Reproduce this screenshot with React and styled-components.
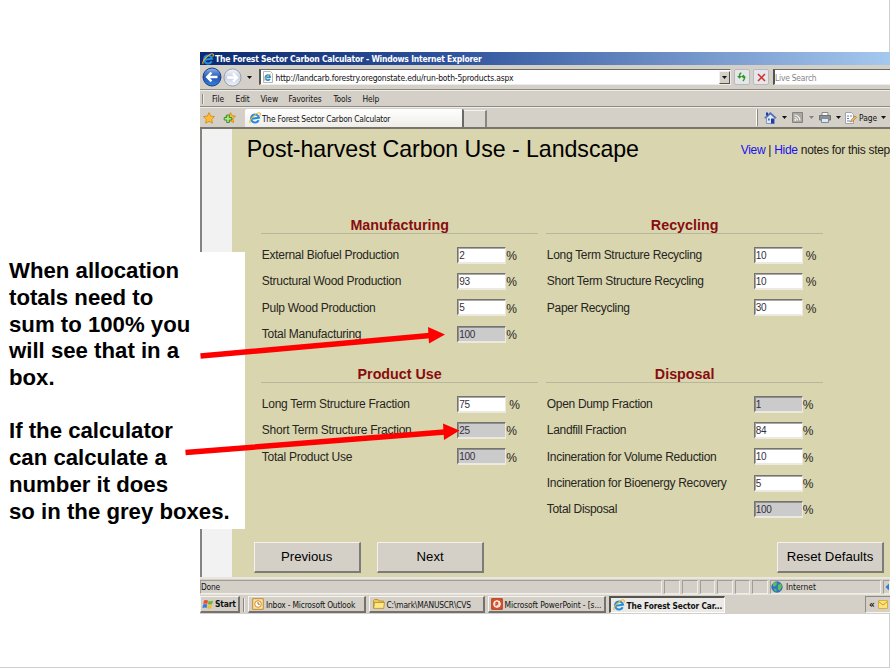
import React from "react";
import styled, { createGlobalStyle } from "styled-components";

const GlobalStyle = createGlobalStyle`
  * { box-sizing: border-box; }
  body { margin: 0; background: #fff; font-family: "Liberation Sans", Arial, sans-serif; }
  svg { flex: none; }
`;

const face = "#d4d0c8";
const khaki = "#d9d5ae";

const Slide = styled.main`
  position: relative;
  width: 890px;
  height: 668px;
  padding: 52px 0 0 200px;
  overflow: hidden;
  background: linear-gradient(#cfcfcf, #cfcfcf) right / 1px 100% no-repeat #fff;
  border-bottom: 1px solid #cfcfcf;
`;

const BrowserWindow = styled.section`
  display: flex;
  flex-direction: column;
  width: 690px;
  height: 562px;
  overflow: hidden;
  background: ${face};
`;

const UiText = styled.span`
  padding-top: ${(p) => p.$drop || 0}px;
  font-family: "DejaVu Sans Condensed", "DejaVu Sans", sans-serif;
  font-stretch: condensed;
  font-size: ${(p) => p.$size || 8.4}px;
  font-weight: ${(p) => (p.$bold ? 700 : 400)};
  letter-spacing: ${(p) => (p.$track === undefined ? -0.2 : p.$track)}px;
  color: ${(p) => p.$color || "#111"};
  line-height: 12px;
  white-space: nowrap;
`;

const TitleBar = styled.header`
  display: flex;
  align-items: center;
  gap: 1px;
  height: 13px;
  padding-left: 2px;
  background: linear-gradient(90deg, #0d2a70 0%, #2d519b 35%, #6d8fc5 68%, #a5c8ef 100%);
`;

const AddressBar = styled.div`
  display: flex;
  align-items: center;
  height: 25px;
  padding-left: 2px;
  border-bottom: 1px solid #8d8b86;
`;

const NavButtons = styled.div`
  display: flex;
  flex: none;
  align-items: center;
  gap: 1px;
  width: 56.5px;
`;

const Field = styled.div`
  display: flex;
  flex: none;
  align-items: center;
  width: ${(p) => p.$width}px;
  height: 16px;
  margin-left: ${(p) => p.$gap || 0}px;
  padding-left: ${(p) => p.$inset || 0}px;
  background: #fff;
  border: 1px solid #eeece6;
  border-top-color: #6b6964;
  border-left: 2px solid #55534f;
  white-space: nowrap;
`;

const UrlText = styled.div`
  flex: 1;
  display: flex;
  align-items: center;
  gap: 2px;
`;

const DropButton = styled.div`
  display: flex;
  align-items: center;
  justify-content: center;
  width: 11px;
  height: 13px;
  background: ${face};
  border: 1px solid #f2f0eb;
  border-right-color: #55534f;
  border-bottom-color: #55534f;
`;

const SquareButton = styled.div`
  display: flex;
  flex: none;
  align-items: center;
  justify-content: center;
  width: 16px;
  height: 16px;
  margin-left: ${(p) => p.$gap}px;
  background: #e6e7ea;
  border: 1px solid #b7bac0;
  border-radius: 2px;
`;

const MenuBar = styled.nav`
  display: flex;
  align-items: center;
  height: 17px;
  padding-left: 2px;
  border-top: 1px solid #efede8;
  border-bottom: 1px solid #8d8b86;
`;

const MenuItem = styled.div`
  display: flex;
  width: ${(p) => p.$width}px;
`;

const Grip = styled.i`
  width: 2px;
  height: ${(p) => p.$height}px;
  margin-right: ${(p) => p.$after}px;
  border-left: 1px solid ${(p) => (p.$raised ? "#fff" : "#8a8882")};
  border-right: 1px solid ${(p) => (p.$raised ? "#8a8882" : "#efede8")};
`;

const TabBar = styled.div`
  display: flex;
  align-items: flex-end;
  height: 22px;
  padding-left: 3px;
  border-top: 1px solid #efede8;
  border-bottom: 2px solid #77756c;
`;

const FavIcons = styled.div`
  display: flex;
  align-items: center;
  gap: 8px;
  width: 42px;
  height: 19px;
`;

const Tab = styled.div`
  display: flex;
  align-items: center;
  gap: 1px;
  width: 219px;
  height: 18px;
  padding-left: 4px;
  background: linear-gradient(#fff, #efede9);
  border-right: 2px solid #6b6964;
  border-radius: 2px 2px 0 0;
`;

const NewTab = styled.div`
  width: 23px;
  height: 17px;
  background: #d9d6cf;
  border-top: 1px solid #f4f2ee;
  border-right: 2px solid #88867f;
`;

const Commands = styled.div`
  flex: 1;
  display: flex;
  align-items: center;
  justify-content: flex-end;
  height: 19px;
`;

const CommandIcon = styled.span`
  display: flex;
  align-items: center;
  width: ${(p) => p.$width}px;
`;

const Page = styled.div`
  display: flex;
  height: 448px;
  border-left: 2px solid #85837f;
`;

const Gutter = styled.div`
  width: 30px;
  background: #f2f2f2;
`;

const Content = styled.div`
  flex: 1;
  padding-left: 15px;
  background: ${khaki};
`;

const TopRow = styled.div`
  display: flex;
  height: 73px;
`;

const Heading = styled.h1`
  width: 494px;
  margin: 0;
  padding-top: 6px;
  font-size: 23.2px;
  font-weight: 400;
  line-height: 28px;
  letter-spacing: -0.06px;
  color: #000;
  white-space: nowrap;
`;

const Notes = styled.div`
  padding-top: 12px;
  font-size: 12px;
  line-height: 18px;
  letter-spacing: -0.29px;
  color: #1c1b18;
  white-space: nowrap;
`;

const NoteLink = styled.a`
  color: #1a10ee;
`;

const Sections = styled.div`
  display: grid;
  grid-template-columns: 277px 277px;
  grid-template-rows: 149px 168px;
  column-gap: 8px;
  padding: 12px 0 0 14.5px;
`;

const Section = styled.section`
  min-width: 0;
`;

const SectionTitle = styled.h2`
  height: 20px;
  margin: 0 0 8px;
  border-bottom: 1px solid #b7b79b;
  font-size: 14.3px;
  font-weight: 700;
  line-height: 22px;
  text-align: center;
  color: #870d10;
`;

const Row = styled.div`
  display: flex;
  align-items: center;
  height: 26.3px;
  padding-left: 0.7px;
`;

const RowLabel = styled.label`
  width: ${(p) => p.$width}px;
  font-size: 12px;
  letter-spacing: ${(p) => p.$track}px;
  color: #26251f;
  white-space: nowrap;
`;

const Value = styled.div`
  width: 49px;
  height: 17px;
  padding-left: 1px;
  background: ${(p) => (p.$grey ? "#cbcbcb" : "#fff")};
  border: 1px solid #757370;
  border-right: 1px solid #ebe9e0;
  border-bottom: 2px solid #ebe9e0;
  box-shadow: inset 1px 1px 0 ${(p) => (p.$grey ? "#8f8e8e" : "#aaa8a6")};
  font-size: 10px;
  line-height: 15px;
  letter-spacing: -0.4px;
  color: #35303c;
`;

const Percent = styled.span`
  padding: 2px 0 0 ${(p) => p.$gap}px;
  font-size: 12px;
  letter-spacing: -0.3px;
  color: #26251f;
`;

const Actions = styled.div`
  display: flex;
  gap: 16.5px;
  padding: 11px 6px 0 7px;
`;

const Button = styled.div`
  width: 107px;
  height: 31px;
  margin-left: ${(p) => (p.$end ? "auto" : 0)};
  background: ${face};
  border: 1px solid #f3f1ea;
  border-right: 2px solid #7d7b78;
  border-bottom: 2px solid #7d7b78;
  font-size: 13.2px;
  line-height: 28px;
  text-align: center;
  white-space: nowrap;
  color: #000;
`;

const StatusBar = styled.footer`
  display: flex;
  align-items: center;
  gap: 2px;
  height: 18px;
  border-top: 2px solid #e9e6df;
  border-bottom: 1px solid #e9e6df;
`;

const StatusCell = styled.div`
  display: flex;
  align-items: center;
  gap: 3px;
  flex: ${(p) => (p.$width ? `0 0 ${p.$width}px` : 1)};
  height: 14px;
  border: 1px solid #a09d96;
  border-right-color: #f0eee9;
  border-bottom-color: #f0eee9;
  overflow: hidden;
`;

const TaskBar = styled.div`
  display: flex;
  align-items: center;
  gap: 3px;
  height: 19px;
`;

const Task = styled.div`
  display: flex;
  align-items: center;
  gap: ${(p) => (p.$gap === undefined ? 2 : p.$gap)}px;
  width: ${(p) => p.$width}px;
  height: 17px;
  padding-left: ${(p) => (p.$pad === undefined ? 4 : p.$pad)}px;
  background: ${(p) => (p.$active ? "#eceae6" : face)};
  border: 1px solid;
  border-color: ${(p) => (p.$active ? "#55534f #fff #fff #55534f" : "#f7f5f1 #74726e #74726e #f7f5f1")};
  border-width: ${(p) => (p.$active ? "2px 1px 1px 2px" : "1px 2px 2px 1px")};
  white-space: nowrap;
`;

const Tray = styled.div`
  display: flex;
  align-items: center;
  gap: 3px;
  width: 25px;
  height: 17px;
  margin-left: auto;
  padding-left: 3px;
  border: 1px solid #8d8b86;
  border-right: 0;
  border-bottom-color: #f7f5f1;
`;

const Callout = styled.aside`
  position: absolute;
  left: 0;
  top: 252px;
  width: 245px;
  height: 277px;
  padding: 6px 0 0 9px;
  background: #fff;
  font-size: 22.2px;
  font-weight: 700;
  line-height: 26.75px;
  color: #000;
  white-space: nowrap;
`;

const Paragraph = styled.p`
  margin: 0 0 26.7px;
`;

const Arrows = styled.svg`
  position: absolute;
  left: 180px;
  top: 320px;
`;

const IeIcon = ({ size = 12 }) => (
  <svg width={size} height={size} viewBox="0 0 12 12">
    <path d="M9.7 8.2A4 4 0 1 1 10 5.7L3 6.7" fill="none" stroke="#248ddd" strokeWidth="2.1" />
    <path d="M1.2 11C-.8 8.6 8.4-.8 11 1.1c.7.6.3 1.8-.4 2.6" fill="none" stroke="#eeb52e" strokeWidth="1.1" />
  </svg>
);

const PageIcon = () => (
  <svg width="12" height="12" viewBox="0 0 12 12">
    <path d="M1.5.5h7l2 2v9h-9z" fill="#fff" stroke="#b5b5b5" />
    <path d="M8 7.8A2.5 2.5 0 1 1 8.2 6L4 6.6" fill="none" stroke="#248ddd" strokeWidth="1.6" />
    <path d="M2.6 9.6C2 8 7 2.8 9 3.2" fill="none" stroke="#eeb52e" />
  </svg>
);

const Caret = ({ color = "#111" }) => (
  <svg width="5" height="3" viewBox="0 0 5 3">
    <path d="M0 0h5L2.5 3z" fill={color} />
  </svg>
);

const NavCircle = ({ forward }) => (
  <svg width={forward ? 19 : 20} height={forward ? 19 : 20} viewBox="0 0 20 20">
    <defs>
      <linearGradient id={forward ? "fwd" : "back"} x1="0" y1="0" x2="0" y2="1">
        <stop offset="0" stopColor={forward ? "#f4f6fa" : "#8fb5ea"} />
        <stop offset=".5" stopColor={forward ? "#c9d2e1" : "#2356b4"} />
        <stop offset="1" stopColor={forward ? "#eef2f8" : "#2f83dc"} />
      </linearGradient>
    </defs>
    <circle cx="10" cy="10" r="9" fill={`url(#${forward ? "fwd" : "back"})`} stroke={forward ? "#8f9bb0" : "#1c3f86"} />
    <path
      d={forward ? "M4.5 10h10M10.5 5.7l4.3 4.3-4.3 4.3" : "M15.5 10h-10M9.5 5.7L5.2 10l4.3 4.3"}
      fill="none"
      stroke="#fff"
      strokeWidth="2.4"
    />
  </svg>
);

const Star = () => (
  <svg width="12" height="12" viewBox="0 0 12 12">
    <path d="M6 .6l1.6 3.5 3.9.5-2.8 2.7.7 3.9L6 9.3l-3.4 1.9.7-3.9L.5 4.6l3.9-.5z" fill="#fdbf35" stroke="#d48412" strokeWidth=".8" />
  </svg>
);

const AddStar = () => (
  <svg width="13" height="12" viewBox="0 0 13 12">
    <path d="M7.5.6l1.4 3 3.6.5L10 6.7l.6 3.9-3.1-1.6-3 1.6.6-3.9L2.5 4.1l3.6-.5z" fill="#fdbf35" stroke="#d48412" strokeWidth=".8" />
    <path d="M3.7 3h2.6v2.5h2.5V8H6.3v2.500H3.7V8H1.2V5.500h2.5z" fill="#a5ec86" stroke="#237b1c" strokeWidth=".8" />
  </svg>
);

const RefreshIcon = () => (
  <svg width="10" height="10" viewBox="0 0 10 10">
    <path d="M4.3 1Q2.3 1.3 2.5 4.5M5.5 4.5Q8 4 7.800 5.500T6 9" fill="none" stroke="#2d9b25" strokeWidth="1.4" />
    <path d="M0 4h5L2.5 6.8zM4.2 4.6L7 2.6v4z" fill="#2d9b25" />
  </svg>
);

const StopIcon = () => (
  <svg width="9" height="9" viewBox="0 0 9 9">
    <path d="M1 1l7 7M8 1L1 8" stroke="#d22c2c" strokeWidth="1.5" />
  </svg>
);

const HomeIcon = () => (
  <svg width="13" height="12" viewBox="0 0 13 12">
    <path d="M2.5 6v5.5h8V6l-4-4z" fill="#dfe9fa" stroke="#6e86b4" strokeWidth=".8" />
    <path d="M.7 6.3l5.6-5.2L12.2 6.3" fill="none" stroke="#4c6cb8" strokeWidth="1.5" />
    <path d="M2 .5h2v3H2zM7 6.5h3v5H7z" fill="#1e3ea6" />
    <path d="M4 6.5h1.7v2H4z" fill="#48679f" />
  </svg>
);

const FeedIcon = () => (
  <svg width="11" height="11" viewBox="0 0 11 11">
    <path d="M.5.5h10v10H.5z" fill="#a9a7a2" stroke="#85837e" />
    <path d="M2.5 5.5a3 3 0 0 1 3 3M2.5 3a5.5 5.5 0 0 1 5.5 5.5" fill="none" stroke="#fbfaf7" strokeWidth="1.2" />
    <circle cx="3.2" cy="8" r=".9" fill="#fbfaf7" />
  </svg>
);

const PrinterIcon = () => (
  <svg width="12" height="11" viewBox="0 0 12 11">
    <path d="M3 .5h6V4H3z" fill="#f6f6f6" stroke="#888" />
    <path d="M.5 3.5h11V8H.5z" fill="#8d9094" stroke="#6f7176" />
    <path d="M2.5 6.5h7v4h-7z" fill="#d9eaf6" stroke="#7f8a94" />
  </svg>
);

const PageMenuIcon = () => (
  <svg width="12" height="12" viewBox="0 0 12 12">
    <path d="M.5.5h6l2 2v9h-8z" fill="#fbfbfb" stroke="#a1a3a8" />
    <path d="M2 4h2M5 4h2M2 6.5h2M2 9h3" stroke="#6285bd" />
    <path d="M5.5 10l.6-2L10 4l1.5 1.4-4 4z" fill="#f0bf58" stroke="#956a30" strokeWidth=".6" />
  </svg>
);

const StartFlag = () => (
  <svg width="12" height="11" viewBox="0 0 12 11">
    <path d="M2 1.5Q4 .3 6 1.5L5.3 5Q3.5 4 1.3 5z" fill="#e6512d" />
    <path d="M6.6 1.7Q9 2.8 11 1.6L10.2 5Q8.3 6 5.9 5.2z" fill="#65b73b" />
    <path d="M1.2 5.6Q3.2 4.5 5.2 5.6L4.5 9Q2.5 8 .4 9z" fill="#3b77dc" />
    <path d="M5.8 5.9Q8 7 10.1 5.8L9.3 9.2Q7.2 10.3 5.1 9.3z" fill="#f6bd22" />
  </svg>
);

const ClockIcon = ({ red }) => (
  <svg width="12" height="12" viewBox="0 0 12 12">
    <path d="M.7.7h10.6v10.6H.7z" fill={red ? "#d8532c" : "#fbe2a5"} stroke={red ? "#b43d1d" : "#c28a2c"} />
    <circle cx="6" cy="6" r="3.3" fill={red ? "#f7cdbc" : "#fff"} stroke={red ? "#fff" : "#d48a23"} />
    <path d={red ? "M5 8V4.3h1.6v2H5" : "M6 4v2.2h1.8"} fill="none" stroke={red ? "#c33c18" : "#a76719"} />
  </svg>
);

const FolderIcon = () => (
  <svg width="12" height="10" viewBox="0 0 12 10">
    <path d="M.5 9V1.5L1.5.5H5L6 2h4.5v2" fill="#f2c84b" stroke="#b98a22" strokeWidth=".8" />
    <path d="M.6 9.4L1.6 3.5h9.9L10.7 9.4z" fill="#fde885" stroke="#b98a22" strokeWidth=".8" />
  </svg>
);

const GlobeIcon = () => (
  <svg width="12" height="12" viewBox="0 0 12 12">
    <circle cx="6" cy="6" r="5.3" fill="#2f76c9" stroke="#27568f" strokeWidth=".6" />
    <path d="M2 2.5Q4 .5 6 1.5L5.5 4 3.5 5.5 2 5zM7 4l3-1.5 1 3-2 4-2-1zM2.5 7.5l3 1v2.3Q3.5 10 2.5 7.5z" fill="#5fc153" />
  </svg>
);

const MailIcon = () => (
  <svg width="10" height="9" viewBox="0 0 10 9">
    <path d="M.5.5h9v8h-9z" fill="#fbe27c" stroke="#dcae3c" />
    <path d="M.5 1.5L5 5l4.5-3.5" fill="none" stroke="#c79b2b" />
  </svg>
);

const ShieldIcon = () => (
  <svg width="9" height="10" viewBox="0 0 9 10">
    <path d="M5 1.5v7L1.500 5z" fill="#2f7fd0" />
  </svg>
);

const menus = [
  ["File", 23.5],
  ["Edit", 25],
  ["View", 28],
  ["Favorites", 45],
  ["Tools", 29],
  ["Help", 30],
];

const sections = [
  {
    title: "Manufacturing", labelWidth: 195.5, track: -0.28,
    rows: [["External Biofuel Production", "2"], ["Structural Wood Production", "93"], ["Pulp Wood Production", "5"], ["Total Manufacturing", "100", true]],
  },
  {
    title: "Recycling", labelWidth: 207, gap: 3, track: -0.3,
    rows: [["Long Term Structure Recycling", "10"], ["Short Term Structure Recycling", "10"], ["Paper Recycling", "30"]],
  },
  {
    title: "Product Use", labelWidth: 195.5, track: -0.26,
    rows: [["Long Term Structure Fraction", "75", false, 3], ["Short Term Structure Fraction", "25", true], ["Total Product Use", "100", true]],
  },
  {
    title: "Disposal", labelWidth: 207, track: -0.32,
    rows: [
      ["Open Dump Fraction", "1", true],
      ["Landfill Fraction", "84"],
      ["Incineration for Volume Reduction", "10"],
      ["Incineration for Bioenergy Recovery", "5"],
      ["Total Disposal", "100", true],
    ],
  },
];

export default function App() {
  return (
    <Slide>
      <GlobalStyle />
      <BrowserWindow>
        <TitleBar>
          <IeIcon size={12} />
          <UiText $bold $color="#fff" $size={8.5} $track={-0.22}>The Forest Sector Carbon Calculator - Windows Internet Explorer</UiText>
        </TitleBar>
        <AddressBar>
          <NavButtons>
            <NavCircle />
            <NavCircle forward />
            <CommandIcon $width={3} />
            <Caret />
          </NavButtons>
          <Field $width={472} $inset={1}>
            <UrlText>
              <PageIcon />
              <UiText $size={8.5} $track={-0.19} $drop={1}>http://landcarb.forestry.oregonstate.edu/run-both-5products.aspx</UiText>
            </UrlText>
            <DropButton><Caret /></DropButton>
          </Field>
          <SquareButton $gap={3.5}><RefreshIcon /></SquareButton>
          <SquareButton $gap={3}><StopIcon /></SquareButton>
          <Field $width={122} $gap={4}>
            <UiText $color="#858585" $drop={1}>Live Search</UiText>
          </Field>
        </AddressBar>
        <MenuBar>
          <Grip $height={10} $after={8} />
          {menus.map(([name, width]) => (
            <MenuItem key={name} $width={width}><UiText $drop={1} $track={-0.1}>{name}</UiText></MenuItem>
          ))}
        </MenuBar>
        <TabBar>
          <FavIcons><Star /><AddStar /></FavIcons>
          <Tab>
            <IeIcon size={12} />
            <UiText $drop={2} $track={-0.23}>The Forest Sector Carbon Calculator</UiText>
          </Tab>
          <NewTab />
          <Commands>
            <Grip $height={17} $after={6} $raised />
            <CommandIcon $width={18}><HomeIcon /></CommandIcon>
            <CommandIcon $width={10}><Caret /></CommandIcon>
            <CommandIcon $width={17}><FeedIcon /></CommandIcon>
            <CommandIcon $width={10}><Caret color="#85837e" /></CommandIcon>
            <CommandIcon $width={17}><PrinterIcon /></CommandIcon>
            <CommandIcon $width={9}><Caret /></CommandIcon>
            <CommandIcon $width={14}><PageMenuIcon /></CommandIcon>
            <CommandIcon $width={22}><UiText $drop={1} $track={0}>Page</UiText></CommandIcon>
            <CommandIcon $width={9}><Caret /></CommandIcon>
          </Commands>
        </TabBar>
        <Page>
          <Gutter />
          <Content>
            <TopRow>
              <Heading>Post-harvest Carbon Use - Landscape</Heading>
              <Notes><NoteLink>View</NoteLink> | <NoteLink>Hide</NoteLink> notes for this step</Notes>
            </TopRow>
            <Sections>
              {sections.map((s) => (
                <Section key={s.title}>
                  <SectionTitle>{s.title}</SectionTitle>
                  {s.rows.map(([label, value, grey, gap]) => (
                    <Row key={label}>
                      <RowLabel $width={s.labelWidth} $track={s.track}>{label}</RowLabel>
                      <Value $grey={grey}>{value}</Value>
                      <Percent $gap={gap || s.gap || 0}>%</Percent>
                    </Row>
                  ))}
                </Section>
              ))}
            </Sections>
            <Actions>
              <Button>Previous</Button>
              <Button>Next</Button>
              <Button $end>Reset Defaults</Button>
            </Actions>
          </Content>
        </Page>
        <StatusBar>
          <StatusCell><UiText $drop={1}>Done</UiText></StatusCell>
          {[0, 1, 2, 3, 4, 5].map((i) => <StatusCell key={i} $width={15.6} />)}
          <StatusCell $width={111}><GlobeIcon /><UiText $drop={1} $track={0}>Internet</UiText></StatusCell>
          <StatusCell $width={7}><ShieldIcon /></StatusCell>
        </StatusBar>
        <TaskBar>
          <Task $width={39.5} $pad={1} $gap={1}><StartFlag /><UiText $bold $size={8.5} $track={-0.2}>Start</UiText></Task>
          <Grip $height={14} $after={0} />
          <Task $width={118} $pad={3.5}><ClockIcon /><UiText $drop={1}>Inbox - Microsoft Outlook</UiText></Task>
          <Task $width={116} $pad={3}><FolderIcon /><UiText $drop={1}>C:\mark\MANUSCR\CVS</UiText></Task>
          <Task $width={118} $pad={2}><ClockIcon red /><UiText $drop={1} $track={-0.1}>Microsoft PowerPoint - [s...</UiText></Task>
          <Task $width={116} $pad={2} $active><IeIcon size={12} /><UiText $bold $size={8.3} $track={-0.12} $drop={1}>The Forest Sector Car...</UiText></Task>
          <Tray><UiText $bold $size={10}>«</UiText><MailIcon /></Tray>
        </TaskBar>
      </BrowserWindow>
      <Callout>
        <Paragraph>When allocation<br />totals need to<br />sum to 100% you<br />will see that in a<br />box.</Paragraph>
        <Paragraph>If the calculator<br />can calculate a<br />number it does<br />so in the grey boxes.</Paragraph>
      </Callout>
      <Arrows width="290" height="145" viewBox="180 320 290 145">
        <path d="M200.5 356L430 335.5M185.5 452.5L445 432" stroke="#fe0000" strokeWidth="5.5" />
        <path d="M428 327l17 7.5-16 9zM443 423.5l16.5 7-15.5 9.5z" fill="#fe0000" />
      </Arrows>
    </Slide>
  );
}
